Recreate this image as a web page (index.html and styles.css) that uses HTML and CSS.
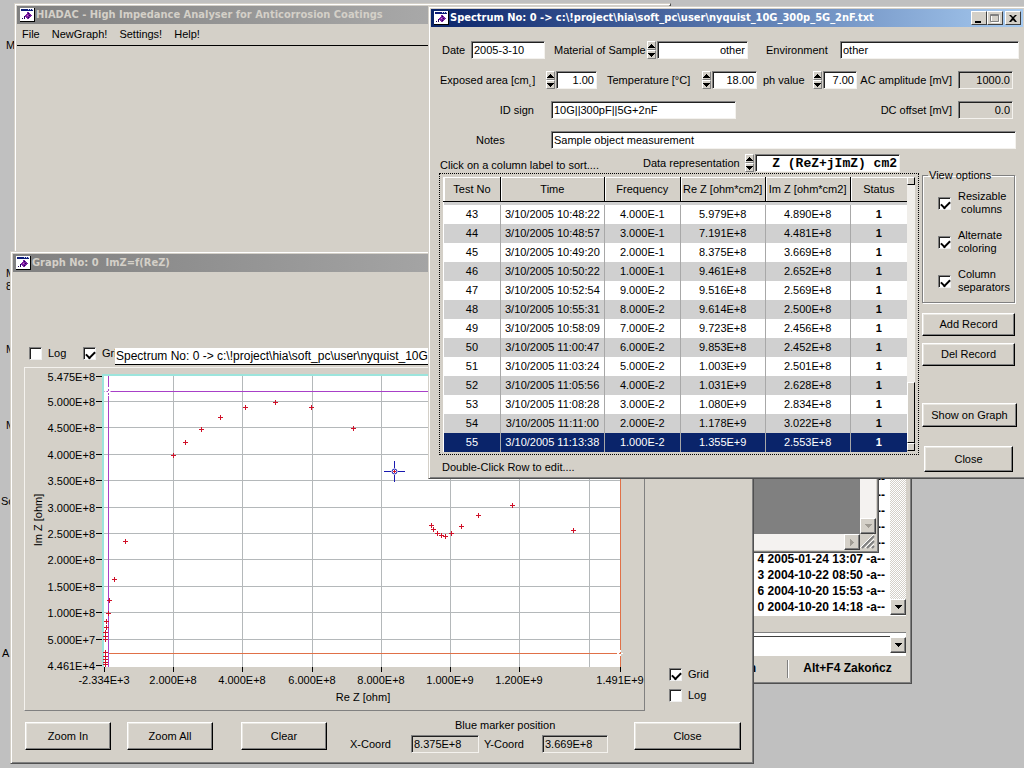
FILE: index.html
```html
<!DOCTYPE html>
<html lang="en">
<head>
<meta charset="utf-8">
<title>HIADAC</title>
<link rel="stylesheet" href="styles.css">
</head>
<body>
<svg class="defs" aria-hidden="true">
  <symbol id="app" viewBox="0 0 15 14">
    <path fill="#000" d="M0 0h15v14H0z"/><path fill="#fff" d="M0 0h14v13H0z"/>
    <path fill="#0a1a78" d="M1 1h12v2H1z"/><path fill="#c8d0f0" d="M8 1h1v1H8zM10 1h1v1h-1zM12 1h1v1h-1z"/>
    <path fill="#7a1fa0" d="M7 4h2v1h1v1h1v1h1v1h-1v1h-1v1H9v1H7v-1H6V9H5V7h1V6h1z"/><path fill="#200060" d="M8 5h1v1H8zM9 7h1v1H9zM8 9h1v1H8zM2 10h1v1H2zM4 8h1v3H4z"/>
    <path fill="#e060d0" d="M7 7h1v1H7z"/>
  </symbol>
  <symbol id="up" viewBox="0 0 7 4"><path d="M3 0h1v1h1v1h1v1h1v1H0V3h1V2h1V1h1z"/></symbol>
  <symbol id="down" viewBox="0 0 7 4"><path d="M0 0h7v1H6v1H5v1H4v1H3V3H2V2H1V1H0z"/></symbol>
  <symbol id="pt" viewBox="0 0 5 5"><path fill="#d01028" d="M2 0h1v2h2v1H3v2H2V3H0V2h2z"/></symbol>
</svg>
<main class="desktop">
  <span class="shortcut s1">M</span><span class="shortcut s2">M<br>8</span><span class="shortcut s3">M</span>
  <span class="shortcut s4">M</span><span class="shortcut s5">Sc</span><span class="shortcut s6">A</span>

  <section class="window files">
    <div class="list">
      <ul>
        <li>-a--</li><li>-a--</li><li>-a--</li><li>-a--</li><li>-a--</li>
        <li>4 2005-01-24 13:07 -a--</li><li>3 2004-10-22 08:50 -a--</li><li>6 2004-10-20 15:53 -a--</li><li>0 2004-10-20 14:18 -a--</li>
      </ul>
      <div class="track"><button class="arrow" aria-label="Scroll down"><svg width="7" height="4"><use href="#down"/></svg></button></div>
    </div>
    <div class="command"><input class="cmd" aria-label="Command line"><button class="arrow" aria-label="History"><svg width="7" height="4"><use href="#down"/></svg></button></div>
    <div class="keys"><span>n</span><button>Alt+F4 Zakończ</button></div>
  </section>

  <section class="window viewer">
    <div class="canvas"></div>
    <div class="vbar"><button class="arrow dim" aria-label="Down"><svg width="7" height="4"><use href="#down"/></svg></button></div>
    <div class="hbar"><button class="arrow dim" aria-label="Right"><svg width="4" height="7"><path d="M0 0h1v1h1v1h1v1h1v1H3v1H2v1H1v1H0z"/></svg></button></div>
    <svg class="grip" width="16" height="15"><path stroke="#808080" stroke-width="2" d="M2 14L14 2M7 14l7-7M12 14l2-2"/><path stroke="#fff" d="M0 14L14 0M5 14l9-9M10 14l4-4"/></svg>
  </section>

  <section class="window main">
    <header class="title idle"><svg width="15" height="14"><use href="#app"/></svg><h1>HIADAC - High Impedance Analyser for Anticorrosion Coatings</h1></header>
    <nav class="menu"><button>File</button><button>NewGraph!</button><button>Settings!</button><button>Help!</button></nav>
  </section>

  <section class="window graph">
    <header class="title idle"><svg width="15" height="14"><use href="#app"/></svg><h2>Graph No: 0&nbsp; ImZ=f(ReZ)</h2></header>
    <div class="options">
      <label class="tick"><input type="checkbox">Log</label>
      <label class="tick"><input type="checkbox" aria-label="Grid" checked>Gri</label>
      <div class="legend">Spectrum No: 0 -&gt; c:\!project\hia\soft_pc\user\nyquist_10G</div>
    </div>
    <div class="middle">
      <div class="panel">
        <svg class="plot" viewBox="25 368 619 342" role="img" aria-label="Im Z against Re Z">
          <path fill="#fff" d="M103 375h518v292H103z"/>
          <path fill="none" stroke="#b4b8ba" d="M173.500 376v291M242.500 376v291M312.500 376v291M381.500 376v291M450.500 376v291M519.500 376v291M589.500 376v291M104 401.500h516M104 427.500h516M104 454.500h516M104 480.500h516M104 507.500h516M104 533.500h516M104 559.500h516M104 586.500h516M104 612.500h516M104 639.500h516"/>
          <path fill="none" stroke="#000" d="M96 376.500h6M96 401.500h6M96 427.500h6M96 454.500h6M96 480.500h6M96 507.500h6M96 533.500h6M96 559.500h6M96 586.500h6M96 612.500h6M96 639.500h6M96 665.500h6M104.500 667v5M173.500 667v5M242.500 667v5M312.500 667v5M381.500 667v5M450.500 667v5M519.500 667v5M620.500 667v5"/>
          <path fill="none" stroke="#9ce4dc" stroke-width="2" d="M103 667V375h518"/>
          <path fill="#e07048" d="M108 653h512v1H108zM620 376h1v291h-1z"/>
          <path fill="#a840c8" d="M104 391h516v1H104zM108 376h1v291h-1z"/>
          <path fill="none" stroke="#fff" stroke-dasharray="2 2" d="M104.500 391.500h8M108.500 387v9M617 653.500h6M620.500 650v8"/>
          <g class="axis">
            <g class="y"><text x="95" y="381">5.475E+8</text><text x="95" y="406">5.000E+8</text><text x="95" y="432">4.500E+8</text><text x="95" y="459">4.000E+8</text><text x="95" y="485">3.500E+8</text><text x="95" y="512">3.000E+8</text><text x="95" y="538">2.500E+8</text><text x="95" y="564">2.000E+8</text><text x="95" y="591">1.500E+8</text><text x="95" y="617">1.000E+8</text><text x="95" y="644">5.000E+7</text><text x="95" y="670">4.461E+4</text></g>
            <g class="x"><text x="104" y="684">-2.334E+3</text><text x="173" y="684">2.000E+8</text><text x="242" y="684">4.000E+8</text><text x="312" y="684">6.000E+8</text><text x="381" y="684">8.000E+8</text><text x="450" y="684">1.000E+9</text><text x="519" y="684">1.200E+9</text><text x="620" y="684">1.491E+9</text><text x="363" y="701">Re Z [ohm]</text><text transform="translate(42 520) rotate(-90)">Im Z [ohm]</text></g>
          </g>
          <g>
            <use href="#pt" width="5" height="5" x="171" y="453"/><use href="#pt" width="5" height="5" x="183" y="440"/><use href="#pt" width="5" height="5" x="199" y="427"/><use href="#pt" width="5" height="5" x="218" y="415"/><use href="#pt" width="5" height="5" x="243" y="405"/><use href="#pt" width="5" height="5" x="273" y="400"/><use href="#pt" width="5" height="5" x="309" y="405"/><use href="#pt" width="5" height="5" x="351" y="426"/>
            <use href="#pt" width="5" height="5" x="429" y="523"/><use href="#pt" width="5" height="5" x="431" y="527"/><use href="#pt" width="5" height="5" x="435" y="531"/><use href="#pt" width="5" height="5" x="439" y="533"/><use href="#pt" width="5" height="5" x="443" y="534"/><use href="#pt" width="5" height="5" x="449" y="531"/><use href="#pt" width="5" height="5" x="459" y="524"/><use href="#pt" width="5" height="5" x="476" y="513"/><use href="#pt" width="5" height="5" x="510" y="503"/><use href="#pt" width="5" height="5" x="571" y="528"/>
            <use href="#pt" width="5" height="5" x="123" y="539"/><use href="#pt" width="5" height="5" x="112" y="577"/><use href="#pt" width="5" height="5" x="107" y="598"/><use href="#pt" width="5" height="5" x="106" y="611"/><use href="#pt" width="5" height="5" x="104" y="619"/><use href="#pt" width="5" height="5" x="104" y="625"/><use href="#pt" width="5" height="5" x="103" y="630"/><use href="#pt" width="5" height="5" x="103" y="634"/><use href="#pt" width="5" height="5" x="103" y="637"/><use href="#pt" width="5" height="5" x="103" y="650"/><use href="#pt" width="5" height="5" x="103" y="654"/><use href="#pt" width="5" height="5" x="103" y="657"/><use href="#pt" width="5" height="5" x="103" y="660"/><use href="#pt" width="5" height="5" x="103" y="662"/>
          </g>
          <path fill="none" stroke="#1818b0" d="M384 471.500h7M398 471.500h7M394.500 461v7M394.500 475v7"/>
          <circle cx="394.500" cy="471.500" r="2.500" fill="#fff" stroke="#1818b0"/><path fill="none" stroke="#d01028" d="M393 471.500h3M394.500 470v3"/>
        </svg>
      </div>
      <aside class="toggles">
        <label class="tick"><input type="checkbox" checked>Grid</label>
        <label class="tick"><input type="checkbox">Log</label>
      </aside>
    </div>
    <footer class="actions">
      <button class="btn">Zoom In</button><button class="btn">Zoom All</button><button class="btn">Clear</button>
      <fieldset class="marker"><legend>Blue marker position</legend>
        <label for="xc">X-Coord</label><input id="xc" class="field off" value="8.375E+8" readonly>
        <label for="yc">Y-Coord</label><input id="yc" class="field off" value="3.669E+8" readonly>
      </fieldset>
      <button class="btn close">Close</button>
    </footer>
  </section>

  <section class="window spectrum">
    <header class="title live"><svg width="15" height="14"><use href="#app"/></svg><h2>Spectrum No: 0 -&gt; c:\!project\hia\soft_pc\user\nyquist_10G_300p_5G_2nF.txt</h2>
      <div class="caps">
        <button aria-label="Minimize"><svg width="10" height="9"><path d="M1 7h6v2H1z"/></svg></button><button aria-label="Maximize" disabled><svg width="10" height="9"><path fill="none" stroke="#fff" d="M1.500 1.500h8v7h-8z"/><path fill="none" stroke="#808080" d="M.5.5h8v7h-8zM0 1.500h9"/></svg></button><button class="x" aria-label="Close window"><svg width="10" height="9"><path d="M1 1h2l2 2 2-2h2L6 4l3 4H7L5 6 3 8H1l3-4z"/></svg></button>
      </div>
    </header>
    <form class="form">
      <div class="row r1">
        <label for="date">Date</label><input id="date" class="field" value="2005-3-10">
        <label for="mat">Material of Sample</label><div class="spin"><div><button type="button" aria-label="Up"><svg width="7" height="4"><use href="#up"/></svg></button><button type="button" aria-label="Down"><svg width="7" height="4"><use href="#down"/></svg></button></div><input id="mat" class="field num" value="other"></div>
        <label for="env">Environment</label><input id="env" class="field" value="other">
      </div>
      <div class="row r2">
        <label for="area">Exposed area [cm˛]</label><div class="spin"><div><button type="button" aria-label="Up"><svg width="7" height="4"><use href="#up"/></svg></button><button type="button" aria-label="Down"><svg width="7" height="4"><use href="#down"/></svg></button></div><input id="area" class="field num" value="1.00"></div>
        <label for="temp">Temperature [°C]</label><div class="spin"><div><button type="button" aria-label="Up"><svg width="7" height="4"><use href="#up"/></svg></button><button type="button" aria-label="Down"><svg width="7" height="4"><use href="#down"/></svg></button></div><input id="temp" class="field num" value="18.00"></div>
        <label for="ph">ph value</label><div class="spin"><div><button type="button" aria-label="Up"><svg width="7" height="4"><use href="#up"/></svg></button><button type="button" aria-label="Down"><svg width="7" height="4"><use href="#down"/></svg></button></div><input id="ph" class="field num" value="7.00"></div>
        <label for="ac">AC amplitude [mV]</label><input id="ac" class="field num off" value="1000.0" readonly>
      </div>
      <div class="row r3">
        <label for="idsign">ID sign</label><input id="idsign" class="field" value="10G||300pF||5G+2nF">
        <label for="dc">DC offset [mV]</label><input id="dc" class="field num off" value="0.0" readonly>
      </div>
      <div class="row r4"><label for="notes">Notes</label><input id="notes" class="field" value="Sample object measurement"></div>
      <div class="row r5"><span>Click on a column label to sort....</span><label for="rep">Data representation</label><div class="spin"><div><button type="button" aria-label="Up"><svg width="7" height="4"><use href="#up"/></svg></button><button type="button" aria-label="Down"><svg width="7" height="4"><use href="#down"/></svg></button></div><input id="rep" class="field num mono" value="Z (ReZ+jImZ) cm2"></div></div>
    </form>
    <div class="content">
      <div class="grid">
        <table>
          <colgroup><col class="c1"><col class="c2"><col class="c3"><col class="c4"><col class="c4"><col class="c1"></colgroup>
          <thead><tr><th>Test No</th><th>Time</th><th>Frequency</th><th>Re Z [ohm*cm2]</th><th>Im Z [ohm*cm2]</th><th>Status</th></tr></thead>
          <tbody>
            <tr class="gap"><td colspan="6"></td></tr>
            <tr><td>43</td><td>3/10/2005 10:48:22</td><td>4.000E-1</td><td>5.979E+8</td><td>4.890E+8</td><td>1</td></tr>
            <tr><td>44</td><td>3/10/2005 10:48:57</td><td>3.000E-1</td><td>7.191E+8</td><td>4.481E+8</td><td>1</td></tr>
            <tr><td>45</td><td>3/10/2005 10:49:20</td><td>2.000E-1</td><td>8.375E+8</td><td>3.669E+8</td><td>1</td></tr>
            <tr><td>46</td><td>3/10/2005 10:50:22</td><td>1.000E-1</td><td>9.461E+8</td><td>2.652E+8</td><td>1</td></tr>
            <tr><td>47</td><td>3/10/2005 10:52:54</td><td>9.000E-2</td><td>9.516E+8</td><td>2.569E+8</td><td>1</td></tr>
            <tr><td>48</td><td>3/10/2005 10:55:31</td><td>8.000E-2</td><td>9.614E+8</td><td>2.500E+8</td><td>1</td></tr>
            <tr><td>49</td><td>3/10/2005 10:58:09</td><td>7.000E-2</td><td>9.723E+8</td><td>2.456E+8</td><td>1</td></tr>
            <tr><td>50</td><td>3/10/2005 11:00:47</td><td>6.000E-2</td><td>9.853E+8</td><td>2.452E+8</td><td>1</td></tr>
            <tr><td>51</td><td>3/10/2005 11:03:24</td><td>5.000E-2</td><td>1.003E+9</td><td>2.501E+8</td><td>1</td></tr>
            <tr><td>52</td><td>3/10/2005 11:05:56</td><td>4.000E-2</td><td>1.031E+9</td><td>2.628E+8</td><td>1</td></tr>
            <tr><td>53</td><td>3/10/2005 11:08:28</td><td>3.000E-2</td><td>1.080E+9</td><td>2.834E+8</td><td>1</td></tr>
            <tr><td>54</td><td>3/10/2005 11:11:00</td><td>2.000E-2</td><td>1.178E+9</td><td>3.022E+8</td><td>1</td></tr>
            <tr class="sel"><td>55</td><td>3/10/2005 11:13:38</td><td>1.000E-2</td><td>1.355E+9</td><td>2.553E+8</td><td>1</td></tr>
          </tbody>
        </table>
        <div class="slider"><i class="cap"></i><i class="rail"></i><i class="thumb"></i><i class="cap"></i></div>
      </div>
      <aside class="side">
        <fieldset class="view"><legend>View options</legend>
          <label class="tick"><input type="checkbox" checked><span>Resizable<br>&nbsp;columns</span></label>
          <label class="tick"><input type="checkbox" checked><span>Alternate<br>coloring</span></label>
          <label class="tick"><input type="checkbox" checked><span>Column<br>separators</span></label>
        </fieldset>
        <button class="btn">Add Record</button><button class="btn">Del Record</button><button class="btn show">Show on Graph</button><button class="btn close">Close</button>
      </aside>
      <p class="hint">Double-Click Row to edit....</p>
    </div>
  </section>
</main>
</body>
</html>
```

FILE: styles.css
```css
* { box-sizing: border-box; }
body { margin: 0; background: #c0c0c0; color: #000; font: 11px/13px "Liberation Sans", Arial, sans-serif; }
button, input { margin: 0; padding: 0; font: inherit; color: inherit; border-radius: 0; }
button { border: 0; background: none; }
h1, h2, p, ul { margin: 0; padding: 0; }
svg { display: block; flex: none; }
.defs { position: absolute; width: 0; height: 0; }
.desktop { position: relative; height: 100vh; overflow: hidden; }

.shortcut { position: absolute; left: 6px; }
.s1 { top: 39px; }
.s2 { top: 267px; }
.s3 { top: 343px; }
.s4 { top: 419px; }
.s5 { top: 495px; left: 1px; }
.s6 { top: 647px; left: 2px; }

.window { position: absolute; background: #d4d0c8; border: 1px solid; border-color: #d4d0c8 #505050 #505050 #d4d0c8; box-shadow: inset 1px 1px #fff, inset -1px -1px #808080; padding: 2px; }
.title { display: flex; align-items: center; height: 18px; padding: 0 2px 0 3px; gap: 1px; }
.title h1, .title h2 { flex: 1; min-width: 0; font: bold 11px/18px "DejaVu Sans Condensed", "DejaVu Sans", sans-serif; white-space: nowrap; }
.idle { background: linear-gradient(90deg, #808080, #c0c0c0); color: #d4d0c8; }
.live { background: linear-gradient(90deg, #0a246a, #a6caf0); color: #fff; }
.caps { display: flex; }
.caps button { display: grid; place-items: center; width: 16px; height: 14px; background: #d4d0c8; border: 1px solid; border-color: #fff #404040 #404040 #fff; }
.caps .x { margin-left: 2px; }

.btn { background: #d4d0c8; border: 1px solid; border-color: #fff #000 #000 #fff; box-shadow: inset -1px -1px #808080, inset 1px 1px #e8e6e0; text-align: center; }
.field { width: 100%; min-width: 0; height: 18px; padding: 0 2px; background: #fff; border: 1px solid; border-color: #808080 #f4f2ee #f4f2ee #808080; box-shadow: inset 1px 1px #202020; }
.off { background: #d4d0c8; }
.num { text-align: right; }
.tick { display: flex; align-items: center; gap: 6px; }
.tick input { appearance: none; position: relative; flex: none; width: 13px; height: 13px; background: #fff; border: 1px solid; border-color: #808080 #f0f0f0 #f0f0f0 #808080; box-shadow: inset 1px 1px #202020; }
.tick input:checked::after { content: ""; position: absolute; left: 2px; top: 3px; width: 7px; height: 4px; border: solid #000; border-width: 0 0 2px 2px; transform: rotate(-45deg); }
.arrow { display: grid; place-items: center; width: 16px; height: 16px; background: #d4d0c8; border: 1px solid; border-color: #fff #404040 #404040 #fff; box-shadow: inset -1px -1px #808080; }
.dim { fill: #a09c94; }

.main { left: 14px; top: 3px; width: 657px; height: 420px; }
.menu { display: flex; gap: 12px; height: 22px; padding: 0 5px; border-bottom: 1px solid #000; }

.files { left: 600px; top: 400px; width: 312px; height: 284px; font-weight: bold; font-size: 12px; display: flex; flex-direction: column; }
.list { flex: 1; display: flex; align-items: flex-end; justify-content: flex-end; background: #fff; margin-right: 3px; border-bottom: 1px solid #fff; min-height: 0; }
.list ul { list-style: none; text-align: right; line-height: 16px; padding-right: 5px; }
.track { display: flex; align-items: flex-end; align-self: stretch; background: repeating-conic-gradient(#fff 0 25%, #d4d0c8 0 50%) 0 0 / 2px 2px; }
.command { display: flex; height: 24px; margin: 16px 3px 0 0; padding: 3px 0 2px; border-top: 1px solid #808080; align-items: center; background: #fff; }
.cmd { flex: 1; height: 18px; border: 0; border-top: 1px solid #404040; background: #fff; }
.keys { display: flex; justify-content: flex-end; align-items: center; height: 25px; padding-right: 2px; gap: 31px; }
.keys button { font-weight: bold; width: 120px; height: 18px; border-left: 1px solid #808080; box-shadow: inset 1px 0 #fff; }

.viewer { left: 640px; top: 400px; width: 239px; height: 153px; display: grid; grid-template: 1fr 16px / 1fr 16px; }
.canvas { background: #808080; }
.vbar, .hbar { display: flex; align-items: flex-end; justify-content: flex-end; background: #f4f2f0; }

.graph { left: 10px; top: 251px; width: 744px; }
.options { position: relative; display: flex; gap: 16px; height: 95px; padding: 0 16px 7px; align-items: flex-end; }
.options .tick { width: 38px; }
.legend { position: absolute; left: 102px; top: 76px; padding: 1px; background: #fff; border-bottom: 1px solid #000; white-space: nowrap; font-size: 12px; line-height: 14px; }
.middle { display: flex; padding-left: 11px; }
.panel { flex: none; width: 621px; border: 1px solid; border-color: #f4f2ee #808080 #808080 #f4f2ee; }
.plot { width: 100%; }
.axis { font-size: 11px; }
.axis .y { text-anchor: end; }
.axis .x { text-anchor: middle; }
.toggles { display: flex; flex-direction: column; justify-content: flex-end; gap: 8px; padding: 0 0 9px 24px; }
.actions { display: grid; grid-template-columns: 86px 86px 86px 1fr 107px; column-gap: 16px; align-items: center; padding: 8px 10px 8px 12px; }
.actions .btn { height: 28px; }
.actions .btn:nth-child(3) { margin: 0 -12px 0 12px; }
.marker { display: grid; grid-template-columns: 61px 68px 63px 66px; align-items: center; border: 0; margin: 0; padding: 3px 0 0 19px; }
.marker legend { padding: 0; margin-left: 105px; }
.marker label:nth-of-type(2) { padding-left: 5px; }

.spectrum { left: 428px; top: 6px; right: -2px; }
.form { padding: 14px 4px 0 9px; }
.row { display: grid; align-items: center; height: 18px; margin-bottom: 12px; white-space: nowrap; }
.r1 { grid-template-columns: 31px 74px 102px 101px 92px 1fr; }
.r1 label { padding-left: 2px; }
.r1 label:nth-of-type(2) { padding-left: 9px; }
.r1 label:nth-of-type(3) { padding-left: 18px; }
.r2 { grid-template-columns: 106px 51px 105px 55px 56px 44px 1fr 55px; padding-right: 6px; }
.r2 label:nth-of-type(2) { padding-left: 10px; }
.r2 label:nth-of-type(3) { padding-left: 6px; }
.r2 label:nth-of-type(4), .r3 label { text-align: right; padding-right: 6px; }
.r3 { grid-template-columns: 111px 185px 1fr 55px; padding-right: 6px; }
.r3 label:first-child { padding-right: 17px; }
.r4 { grid-template-columns: 111px 1fr; padding-right: 3px; margin-bottom: 5px; }
.r4 label { padding-left: 36px; }
.r5 { grid-template-columns: 203px 102px 155px; margin-bottom: 1px; }
.r5 span { align-self: end; }
.mono { font: bold 13px/16px "Liberation Mono", monospace; }
.spin { display: flex; gap: 1px; }
.spin > div { display: grid; grid-template-rows: 9px 9px; width: 9px; flex: none; }
.spin button { display: grid; place-items: center; border: 1px solid; border-color: #fff #808080 #808080 #fff; }

.content { display: grid; grid-template-columns: 480px 1fr; padding: 0 6px 0 8px; }
.grid { display: flex; align-items: stretch; border: 1px dotted #000; padding: 3px; height: 282px; }
.content table { flex: 1; border-collapse: collapse; table-layout: fixed; border-left: 1px solid #fff; }
.c1 { width: 57px; }
.c2 { width: 104px; }
.c3 { width: 76px; }
.c4 { width: 85px; }
th { height: 24px; padding: 2px 0 0; font-weight: normal; border-right: 1px solid #000; border-bottom: 1px solid #000; box-shadow: inset 1px 1px #fff; white-space: nowrap; }
td { height: 19px; padding: 0; text-align: center; border-right: 1px solid #a8a8a8; white-space: nowrap; }
th:last-child, td:last-child { border-right: 0; }
td:last-child { font-weight: bold; }
tbody tr { background: #fff; }
tbody tr:nth-child(odd) { background: #d0d0d0; }
tbody .gap td { height: 4px; }
tbody .sel { background: #0a246a; color: #fff; }
.slider { display: flex; flex-direction: column; width: 8px; }
.slider i { background: #d4d0c8; border: 1px solid; border-color: #fff #000 #000 #fff; }
.slider .cap { height: 8px; }
.slider .rail { flex: 1; background: #f0eeea; border: 0; }
.slider .thumb { height: 61px; }
.side { grid-row: span 2; display: flex; flex-direction: column; padding: 0 0 4px 3px; }
.side .btn { height: 23px; margin: 0 2px 7px 0; }
.side .show { margin: 30px 0 19px; height: 24px; }
.side .close { margin: 0 4px 0 2px; height: 26px; }
.view { margin: -4px 2px 10px 0; padding: 8px 0 8px 15px; height: 134px; border: 1px solid #808080; box-shadow: 1px 1px #fff, inset 1px 1px #fff; min-width: 0; }
.view legend { margin-left: -10px; padding: 0 1px; }
.view .tick { margin-bottom: 13px; gap: 7px; }
.hint { padding: 5px 0 2px 3px; }
```
